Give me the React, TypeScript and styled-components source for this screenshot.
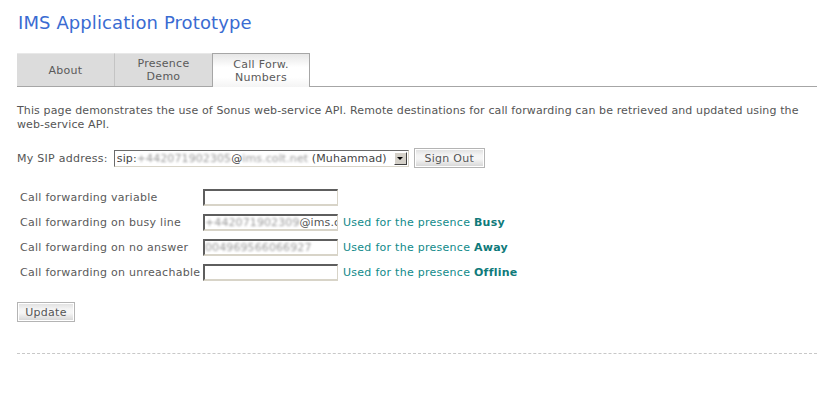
import { createGlobalStyle, styled } from 'styled-components';

const GlobalStyle = createGlobalStyle`
    html, body {
        margin: 0;
        padding: 0;
        background: #ffffff;
    }
    body {
        font-family: "DejaVu Sans", Verdana, sans-serif;
        font-size: 11px;
        letter-spacing: 0.27px;
        color: #555555;
    }
`;

const Page = styled.div`
    padding: 12px 10px 0 17px;
`;

const Title = styled.h1`
    margin: 0 0 0 1px;
    font-size: 18px;
    font-weight: normal;
    letter-spacing: 0.1px;
    color: #3a6bd2;
    line-height: 22px;
`;

const TabBar = styled.div`
    display: flex;
    margin-top: 19px;
    border-bottom: 1px solid #a6a6a6;
`;

const Tab = styled.div<{ $active?: boolean }>`
    width: 98px;
    height: ${(p) => (p.$active ? '34px' : '33px')};
    margin-bottom: ${(p) => (p.$active ? '-1px' : '0')};
    box-sizing: border-box;
    display: flex;
    align-items: center;
    justify-content: center;
    text-align: center;
    line-height: 13px;
    color: #5a5a5a;
    background: ${(p) => (p.$active ? 'linear-gradient(#e6e6e6, #ffffff 40%, #ffffff 70%, #f4f4f4)' : '#dcdcdc')};
    border-top: 1px solid ${(p) => (p.$active ? '#a6a6a6' : '#e8e8e8')};
    border-left: 1px solid ${(p) => (p.$active ? '#a6a6a6' : '#c4c4c4')};
    border-right: ${(p) => (p.$active ? '1px solid #a6a6a6' : 'none')};
    &:first-child {
        border-left: none;
        width: 97px;
    }
`;

const Intro = styled.p`
    margin: 17px 0 0;
    line-height: 14px;
    letter-spacing: 0.12px;
    color: #555555;
`;

const SipRow = styled.div`
    display: flex;
    align-items: center;
    margin-top: 16px;
    height: 20px;
`;

const SipLabel = styled.span`
    margin-right: 6px;
`;

const FakeSelect = styled.div`
    display: flex;
    align-items: center;
    width: 295px;
    height: 17px;
    box-sizing: border-box;
    border-top: 1px solid #6b6b6b;
    border-left: 1px solid #6b6b6b;
    border-right: 1px solid #d8d4c8;
    border-bottom: 1px solid #d8d4c8;
    padding-left: 2px;
    color: #444444;
    background: #ffffff;
    white-space: nowrap;
    overflow: hidden;
    letter-spacing: 0.1px;
`;

const SelectText = styled.span`
    flex: 1;
    overflow: hidden;
`;

const Blur = styled.span`
    color: #9a9a9a;
    filter: blur(0.8px);
`;

const Arrow = styled.span`
    flex: none;
    width: 13px;
    height: 13px;
    margin: 0 1px 0 3px;
    box-sizing: border-box;
    background: #d4d0c8;
    border-top: 1px solid #ffffff;
    border-left: 1px solid #ffffff;
    border-right: 1px solid #404040;
    border-bottom: 1px solid #404040;
    display: flex;
    align-items: center;
    justify-content: center;
    &::after {
        content: '';
        border-left: 3px solid transparent;
        border-right: 3px solid transparent;
        border-top: 3px solid #000000;
        margin-top: 1px;
    }
`;

const Button = styled.button`
    font-family: "DejaVu Sans", Verdana, sans-serif;
    font-size: 11px;
    letter-spacing: 0.27px;
    color: #555555;
    height: 20px;
    padding: 0 9px;
    border: 1px solid #b4b4b4;
    box-shadow: inset 0 0 0 1px #ffffff;
    background: linear-gradient(#dedede, #f4f4f4 35%, #f6f6f6 55%, #d4d4d4);
    cursor: pointer;
`;

const SignOut = styled(Button)`
    margin-left: 5px;
    width: 71px;
    padding: 0;
`;

const FormTable = styled.div`
    display: grid;
    grid-template-columns: 178px 135px auto;
    row-gap: 8px;
    column-gap: 5px;
    align-items: center;
    margin: 21px 0 0 3px;
`;

const FieldLabel = styled.span`
    color: #5a5a5a;
    white-space: nowrap;
`;

const Field = styled.div`
    width: 135px;
    height: 17px;
    box-sizing: border-box;
    border-top: 2px solid #5e5e5e;
    border-left: 2px solid #5e5e5e;
    border-right: 1px solid #d8d4c8;
    border-bottom: 2px solid #d8d4c8;
    background: #ffffff;
    overflow: hidden;
    white-space: nowrap;
    line-height: 13px;
    letter-spacing: 0.1px;
    color: #555555;
`;

const FieldValue = styled.span`
    display: block;
    overflow: hidden;
    width: 100%;
`;

const Hint = styled.span`
    color: #108a8a;
    white-space: nowrap;
    b {
        color: #0f7a7a;
    }
`;

const UpdateButton = styled(Button)`
    margin-top: 21px;
    width: 58px;
    padding: 0;
`;

const Divider = styled.hr`
    margin: 31px 0 0;
    border: none;
    border-top: 1px dashed #c8c8c8;
`;

const fields = [
    { label: 'Call forwarding variable', value: null, hint: null },
    { label: 'Call forwarding on busy line', value: 'busy', hint: 'Busy' },
    { label: 'Call forwarding on no answer', value: 'away', hint: 'Away' },
    { label: 'Call forwarding on unreachable', value: null, hint: 'Offline' },
];

export default function App() {
    return (
        <>
            <GlobalStyle />
            <Page>
                <Title>IMS Application Prototype</Title>
                <TabBar>
                    <Tab>About</Tab>
                    <Tab>
                        Presence
                        <br />
                        Demo
                    </Tab>
                    <Tab $active>
                        Call Forw.
                        <br />
                        Numbers
                    </Tab>
                </TabBar>
                <Intro>
                    This page demonstrates the use of Sonus web-service API. Remote destinations for call forwarding can
                    be retrieved and updated using the web-service API.
                </Intro>
                <SipRow>
                    <SipLabel>My SIP address:</SipLabel>
                    <FakeSelect>
                        <SelectText>
                            sip:<Blur>+442071902305</Blur>@<Blur>ims.colt.net</Blur> (Muhammad)
                        </SelectText>
                        <Arrow />
                    </FakeSelect>
                    <SignOut>Sign Out</SignOut>
                </SipRow>
                <FormTable>
                    {fields.map((f) => (
                        <>
                            <FieldLabel key={f.label}>{f.label}</FieldLabel>
                            <Field>
                                <FieldValue>
                                    {f.value === 'busy' && (
                                        <>
                                            <Blur>+442071902309</Blur>@ims.colt.net
                                        </>
                                    )}
                                    {f.value === 'away' && <Blur>004969566066927</Blur>}
                                </FieldValue>
                            </Field>
                            <Hint>
                                {f.hint && (
                                    <>
                                        Used for the presence <b>{f.hint}</b>
                                    </>
                                )}
                            </Hint>
                        </>
                    ))}
                </FormTable>
                <UpdateButton>Update</UpdateButton>
                <Divider />
            </Page>
        </>
    );
}
